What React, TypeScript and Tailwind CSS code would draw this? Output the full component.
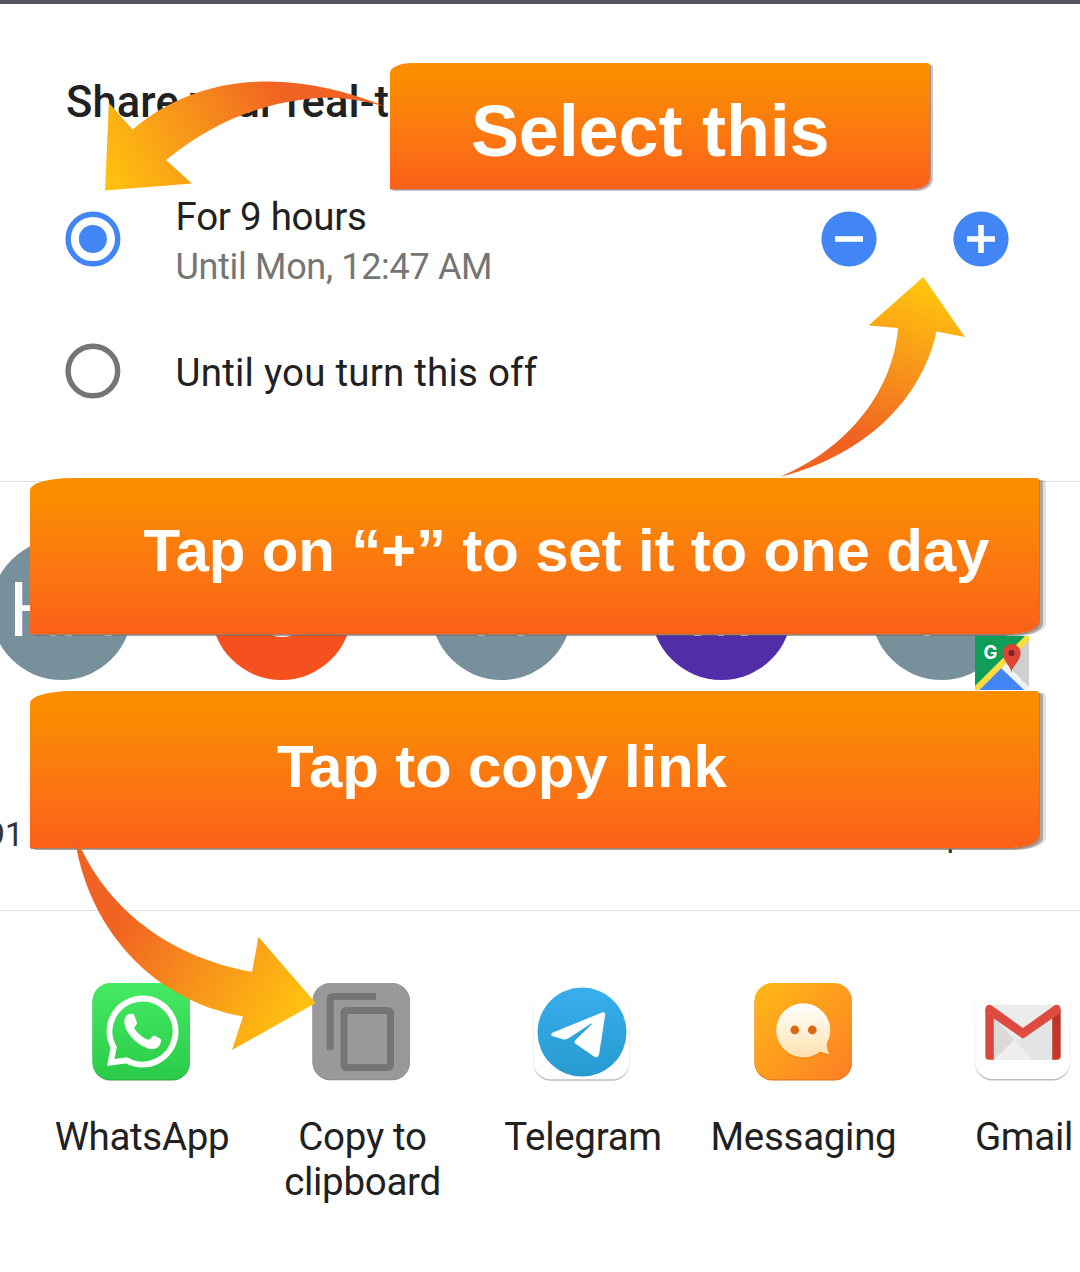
import type { ReactNode } from "react";

function WhatsAppIcon() {
  return (
    <svg viewBox="0 0 98 98" className="h-[98px] w-[98px]">
      <defs>
        <linearGradient id="wa" x1="0" y1="0" x2="0" y2="1">
          <stop offset="0" stopColor="#44ea62" />
          <stop offset="1" stopColor="#2bcb49" />
        </linearGradient>
      </defs>
      <rect x="0.5" y="1" width="97.5" height="96.5" rx="18" fill="#2aa844" />
      <rect x="0.5" y="0" width="97.5" height="96.5" rx="18" fill="url(#wa)" />
      <path
        d="M18.700 79.500 L21.700 64.500 A33 33 0 1 1 34.500 77.300 Z"
        fill="none"
        stroke="#fff"
        strokeWidth="6"
      />
      <path
        d="M34.5 32.5 C37 30.5 41 30.4 42 31.5 L45 39.6 C45.3 41 43 43.8 42.3 44.9 C45 50 51 55.2 56.8 56.8 C58 56.7 60 53.4 61.6 52.6 C63 52.8 68.4 55.5 68.9 56.6 C69.3 59 68 63 65.5 64.5 C61 67 57.5 66.2 52 63.7 C45.500 61 38 53.500 34.500 47 C31.500 41 31.800 35.500 34.500 32.500 Z"
        fill="#fff"
      />
    </svg>
  );
}

function CopyIcon() {
  return (
    <svg viewBox="0 0 98 98" className="relative -left-px h-[98px] w-[98px]">
      <rect x="0.500" y="0.300" width="97.500" height="97" rx="18" fill="#858585" />
      <rect x="0.500" y="0" width="97.500" height="96.500" rx="18" fill="#999" />
      <path d="M14.700 66.700 V16.500 Q14.700 10 21.200 10 H64 V17 H21.700 V66.700 Z" fill="#757575" />
      <path
        fillRule="evenodd"
        d="M35 24 H75.500 Q82 24 82 30.500 V81.500 Q82 88 75.500 88 H35 Q28.500 88 28.500 81.500 V30.500 Q28.500 24 35 24 Z M35.500 31 V81 H75 V31 Z"
        fill="#757575"
      />
    </svg>
  );
}

function TelegramIcon() {
  return (
    <svg viewBox="0 0 98 98" className="h-[98px] w-[98px]">
      <defs>
        <linearGradient id="tg" x1="0" y1="0" x2="0" y2="1">
          <stop offset="0" stopColor="#38aeeb" />
          <stop offset="1" stopColor="#279ad1" />
        </linearGradient>
        <linearGradient id="plate" x1="0" y1="0" x2="0" y2="1">
          <stop offset="0.100" stopColor="#fff" />
          <stop offset="0.300" stopColor="#f0f0f0" />
          <stop offset="0.850" stopColor="#ebebeb" />
          <stop offset="1" stopColor="#bcbcbc" />
        </linearGradient>
      </defs>
      <g transform="translate(-0.500 0.300)">
        <rect x="0.500" y="0.500" width="97" height="97" rx="18" fill="url(#plate)" />
        <rect x="1.300" y="0" width="95.400" height="96" rx="17.500" fill="#fff" />
        <circle cx="49.500" cy="48.800" r="44.500" fill="url(#tg)" />
        <path
          d="M69.500 29.200 C72 28.500 73 29.500 72.600 32 L66.700 70.500 C66 74 64 74.600 61.500 73.200 L43 60.500 C41.500 59.300 41.800 58 43 56.700 L59 41.300 C59.600 40.300 58.800 40 57.800 40.600 L36.500 54.800 C34.500 56.200 32.500 56.500 30.500 56 L20.500 53 C18 52 18 50.500 20.500 49.300 Z"
          fill="#fff"
        />
      </g>
    </svg>
  );
}

function MessagingIcon() {
  return (
    <svg viewBox="0 0 98 98" className="h-[98px] w-[98px]">
      <defs>
        <linearGradient id="ms" x1="0" y1="0" x2="1" y2="1">
          <stop offset="0" stopColor="#ffb917" />
          <stop offset="1" stopColor="#fd7e24" />
        </linearGradient>
        <linearGradient id="bub" x1="0" y1="0" x2="0" y2="1">
          <stop offset="0" stopColor="#fff" />
          <stop offset="1" stopColor="#ffe2b0" />
        </linearGradient>
      </defs>
      <rect x="0.500" y="1" width="97.500" height="96.500" rx="18" fill="#e06f17" />
      <rect x="0.500" y="0" width="97.500" height="96.500" rx="18" fill="url(#ms)" />
      <g transform="translate(0.500 0)">
        <path
          d="M65.500 68.500 A27 27 0 1 1 72.300 60.500 C72.300 64.500 73 68 74.300 70 C74.500 71 74 71.300 73 71 Z"
          fill="#e8740f"
          opacity="0.350"
          transform="translate(0 1.800)"
        />
        <path
          d="M65.500 68.500 A27 27 0 1 1 72.300 60.500 C72.300 64.500 73 68 74.300 70 C74.500 71 74 71.300 73 71 Z"
          fill="url(#bub)"
        />
        <circle cx="40.300" cy="47" r="4.400" fill="#d86c13" />
        <circle cx="57.800" cy="47" r="4.400" fill="#d86c13" />
      </g>
    </svg>
  );
}

function GmailIcon() {
  return (
    <svg viewBox="0 0 98 98" className="h-[98px] w-[98px]">
      <defs>
        <linearGradient id="gr" x1="0" y1="0" x2="0" y2="1">
          <stop offset="0" stopColor="#b93426" />
          <stop offset="1" stopColor="#c9382a" />
        </linearGradient>
      </defs>
      <rect x="0.500" y="0.500" width="96" height="97" rx="18" fill="url(#plate)" />
      <rect x="1.300" y="0" width="94.400" height="96" rx="17.500" fill="#fff" />
      <g transform="translate(1 0.500)">
        <rect x="11" y="21.300" width="74" height="55" rx="3" fill="#ececec" />
        <path d="M19 34 L58 76.300 H19 Z" fill="#dadada" />
        <path d="M19 76.300 L39.500 56 L58 76.300 Z" fill="#efefef" />
        <path d="M48 55 L77 36 V76.300 H58 L39.500 56 Z" fill="#e4e4e4" />
        <path d="M10.300 26 L18.800 31 V76.300 H14 Q10.300 76.300 10.300 72.500 Z" fill="#d9483b" />
        <path d="M85.700 26 L77.200 31 V76.300 H82 Q85.700 76.300 85.700 72.500 Z" fill="url(#gr)" />
        <path
          d="M10.300 26 C10.300 22 14 20 17 22.300 L48 44.500 L79 22.300 C82 20 85.700 22 85.700 26 C85.700 28 85 29.500 83.700 30.500 L48 55.300 L12.300 30.500 C11 29.500 10.300 28 10.300 26 Z"
          fill="#de4c3f"
        />
      </g>
    </svg>
  );
}

function MapsIcon() {
  return (
    <svg viewBox="0 0 54 54" className="h-[54px] w-[54px]">
      <rect width="54" height="54" fill="#cfcfcf" />
      <path d="M0 0 H54 L0 54 Z" fill="#109d58" />
      <path d="M27 27 L54 54 H0 Z" fill="#4285f4" />
      <path d="M26 32 L30.500 27.500 L54 51 V54 H49 Z" fill="#f1f1f1" />
      <path d="M54 0 V4.500 L4.500 54 H0 V50 L50 0 Z" fill="#ffdd3c" />
      <path
        d="M36.500 37 C36 29 27.700 25.500 27.700 17 A9 9 0 0 1 45.700 17 C45.700 25.500 37.200 29 36.500 37 Z"
        fill="#dc4437"
      />
      <circle cx="36.500" cy="17" r="3" fill="#7b231e" />
      <text x="15.500" y="23" textAnchor="middle" fill="#fff" className="font-['Inter'] text-[18.500px] font-bold">
        G
      </text>
    </svg>
  );
}

const apps: { label: ReactNode; icon: ReactNode }[] = [
  { label: "WhatsApp", icon: <WhatsAppIcon /> },
  { label: <>Copy to<br />clipboard</>, icon: <CopyIcon /> },
  { label: "Telegram", icon: <TelegramIcon /> },
  { label: "Messaging", icon: <MessagingIcon /> },
  { label: "Gmail", icon: <GmailIcon /> },
];

const contacts = [
  { initials: "HA", color: "bg-[#78909c]" },
  { initials: "S", color: "bg-[#f4511e]" },
  { initials: "A", color: "bg-[#78909c]" },
  { initials: "M", color: "bg-[#512da8]" },
  { initials: "P", color: "bg-[#78909c]", name: "Maps", badge: true },
];

function Radio({ checked }: { checked?: boolean }) {
  return (
    <svg viewBox="0 0 56 56" className="h-14 w-14 shrink-0">
      <circle cx="27.900" cy="28" r="24.800" fill="none" stroke={checked ? "#4285f4" : "#757575"} strokeWidth="5.400" />
      {checked && <circle cx="27.900" cy="28" r="14" fill="#4285f4" />}
    </svg>
  );
}

function StepButton({ plus }: { plus?: boolean }) {
  return (
    <button className="h-14 w-14 shrink-0">
      <svg viewBox="0 0 56 56" className="h-14 w-14">
        <circle cx="28" cy="28" r="27.600" fill="#4285f4" />
        <path d={plus ? "M14 28H42M28 14V42" : "M14 28H42"} stroke="#fff" strokeWidth="5.600" />
      </svg>
    </button>
  );
}

function Arrows() {
  return (
    <svg viewBox="0 0 1080 1272" className="pointer-events-none absolute inset-0 h-[1272px] w-[1080px]">
      <defs>
        <linearGradient id="a1" gradientUnits="userSpaceOnUse" x1="110" y1="190" x2="283" y2="95">
          <stop offset="0" stopColor="#ffc20e" />
          <stop offset="0.550" stopColor="#f7901b" />
          <stop offset="1" stopColor="#f06322" />
        </linearGradient>
        <linearGradient id="a2" gradientUnits="userSpaceOnUse" x1="915" y1="285" x2="858" y2="438">
          <stop offset="0" stopColor="#ffc20e" />
          <stop offset="0.550" stopColor="#f7901b" />
          <stop offset="1" stopColor="#f06322" />
        </linearGradient>
        <linearGradient id="a3" gradientUnits="userSpaceOnUse" x1="298" y1="1020" x2="122" y2="918">
          <stop offset="0" stopColor="#ffc20e" />
          <stop offset="0.550" stopColor="#f7901b" />
          <stop offset="1" stopColor="#f06322" />
        </linearGradient>
      </defs>
      <path
        d="M105 190.500 L109 103 L132.500 129.500 C170 98 215 81.500 268 81.500 C310 81.500 350 92 388 107.500 C360 99 337 97 318 98 C265 102 215 120 166 160 L192 183.500 Z"
        fill="url(#a1)"
      />
      <path
        d="M923.300 277 L965 337 L936.500 331.500 C923 395 870 454 780 477 C850 447 893 390 898 328 L868.500 325.500 Z"
        fill="url(#a2)"
      />
      <path
        d="M74 832 C100 900 160 955 252 972 L258.500 937 L315.700 1003 L232 1050 L243 1016.500 C150 1000 85 925 74 832 Z"
        fill="url(#a3)"
      />
    </svg>
  );
}

export default function App() {
  return (
    <div className="relative h-[1272px] w-[1080px] overflow-hidden bg-white font-['Roboto',sans-serif] text-[#212121]">
      <div className="h-1 bg-[#52565f]" />

      <section className="flex h-[478px] flex-col border-b border-[#e0e0e0] pr-[71px] pl-[65px]">
        <h1 className="mt-[73px] ml-[1px] h-[52px] text-[43.500px] leading-[52px] font-medium tracking-[0.120px] whitespace-nowrap">
          Share your real-time location
        </h1>
        <div className="mt-[63px] flex h-[94px] items-start">
          <div className="mt-[19px]">
            <Radio checked />
          </div>
          <div className="ml-[54.500px] flex-1 whitespace-nowrap">
            <div className="text-[38.500px] leading-[50px] tracking-[-0.250px]">For 9 hours</div>
            <div className="text-[36px] leading-[50px] tracking-[-0.320px] text-[#757575]">Until Mon, 12:47 AM</div>
          </div>
          <div className="mt-[19px] flex gap-[76px]">
            <StepButton />
            <StepButton plus />
          </div>
        </div>
        <div className="mt-[57px] flex h-14 items-start">
          <Radio />
          <div className="mt-[5px] ml-[54.500px] text-[38.500px] leading-[50px] tracking-[0.220px]">
            Until you turn this off
          </div>
        </div>
      </section>

      <section className="flex h-[429px] border-b border-[#e0e0e0] pt-[57px]">
        <div className="-ml-[49px] flex">
          {contacts.map((c, i) => (
            <div key={i} className="flex w-[220px] shrink-0 flex-col items-center">
              <div className={`relative flex h-[141px] w-[141px] items-center justify-center rounded-full ${c.color}`}>
                <span className="pt-[1px] text-[76px] leading-none font-normal text-white">{c.initials}</span>
                {c.badge && (
                  <span className="absolute right-[-17px] bottom-[-10px]">
                    <MapsIcon />
                  </span>
                )}
              </div>
              <div className="mt-[135px] flex h-10 w-full justify-center text-[33px] leading-10 text-[#333]">
                {i === 0 ? <span className="mr-[112px]">91</span> : c.name}
              </div>
            </div>
          ))}
        </div>
      </section>

      <section className="flex pt-[72px] pl-[31px]">
        {apps.map((a, i) => (
          <div key={i} className="flex w-[220.500px] shrink-0 flex-col items-center">
            {a.icon}
            <div className="mt-[33px] pl-[1.500px] text-center text-[38.500px] leading-[45px] tracking-[-0.300px] whitespace-nowrap">
              {a.label}
            </div>
          </div>
        ))}
      </section>

      <div className="absolute top-[63px] left-[390px] h-[125.500px] w-[540px] rounded-tl-[22px_10px] rounded-tr-[3px] rounded-br-[16px_12px] bg-linear-to-b from-[#fa8e00] from-10% to-[#fb6018] pt-[27px] pl-[81px] font-['Liberation_Sans',sans-serif] text-[72px] leading-[83px] font-bold tracking-[-0.150px] whitespace-nowrap text-white shadow-[1px_1px_0_#a89088,3px_2px_0_rgba(120,115,115,0.400)]">
        Select this
      </div>
      <div className="absolute top-[478px] left-[30px] h-[156px] w-[1009px] rounded-tl-[42px_12px] rounded-tr-[3px] rounded-br-[30px_12px] bg-linear-to-b from-[#fa8e00] from-10% to-[#fb6018] pt-[38px] pl-[113.500px] font-['Liberation_Sans',sans-serif] text-[60px] leading-[69px] font-bold tracking-[-0.160px] whitespace-nowrap text-white shadow-[1px_1px_0_#a0806c,4px_2px_0_rgba(100,95,95,0.450),7px_2px_0_rgba(120,110,105,0.200)]">
        Tap on “+” to set it to one day
      </div>
      <div className="absolute top-[691px] left-[30px] h-[157px] w-[1009px] rounded-tl-[42px_12px] rounded-tr-[3px] rounded-br-[30px_12px] bg-linear-to-b from-[#fa8e00] from-10% to-[#fb6018] pt-[41px] pl-[247px] font-['Liberation_Sans',sans-serif] text-[60px] leading-[69px] font-bold tracking-[-0.160px] whitespace-nowrap text-white shadow-[1px_1px_0_#a0806c,4px_2px_0_rgba(100,95,95,0.450),7px_2px_0_rgba(120,110,105,0.200)]">
        Tap to copy link
      </div>

      <Arrows />
    </div>
  );
}
